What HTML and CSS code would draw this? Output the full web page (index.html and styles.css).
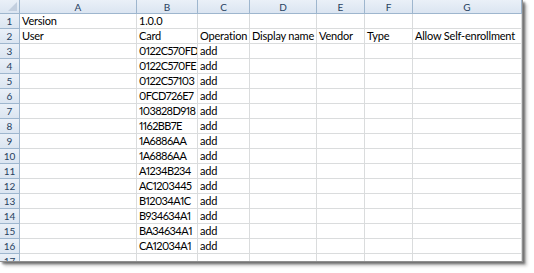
FILE: index.html
```html
<!DOCTYPE html>
<html>
<head>
<meta charset="utf-8">
<link rel="stylesheet" href="styles.css">
</head>
<body>
<div class="sheet">
  <div class="grid">
    <div class="corner"><span class="tri"></span></div>
    <div class="colhead">A</div><div class="colhead">B</div><div class="colhead">C</div><div class="colhead">D</div><div class="colhead">E</div><div class="colhead">F</div><div class="colhead">G</div>

    <div class="rowhead">1</div><div class="cell">Version</div><div class="cell">1.0.0</div><div class="cell"></div><div class="cell"></div><div class="cell"></div><div class="cell"></div><div class="cell"></div>
    <div class="rowhead">2</div><div class="cell">User</div><div class="cell">Card</div><div class="cell">Operation</div><div class="cell">Display name</div><div class="cell">Vendor</div><div class="cell">Type</div><div class="cell">Allow Self-enrollment</div>
    <div class="rowhead">3</div><div class="cell"></div><div class="cell code">0122C570FD</div><div class="cell">add</div><div class="cell"></div><div class="cell"></div><div class="cell"></div><div class="cell"></div>
    <div class="rowhead">4</div><div class="cell"></div><div class="cell code">0122C570FE</div><div class="cell">add</div><div class="cell"></div><div class="cell"></div><div class="cell"></div><div class="cell"></div>
    <div class="rowhead">5</div><div class="cell"></div><div class="cell code">0122C57103</div><div class="cell">add</div><div class="cell"></div><div class="cell"></div><div class="cell"></div><div class="cell"></div>
    <div class="rowhead">6</div><div class="cell"></div><div class="cell code">0FCD726E7</div><div class="cell">add</div><div class="cell"></div><div class="cell"></div><div class="cell"></div><div class="cell"></div>
    <div class="rowhead">7</div><div class="cell"></div><div class="cell code">103828D918</div><div class="cell">add</div><div class="cell"></div><div class="cell"></div><div class="cell"></div><div class="cell"></div>
    <div class="rowhead">8</div><div class="cell"></div><div class="cell code">1162BB7E</div><div class="cell">add</div><div class="cell"></div><div class="cell"></div><div class="cell"></div><div class="cell"></div>
    <div class="rowhead">9</div><div class="cell"></div><div class="cell code">1A6886AA</div><div class="cell">add</div><div class="cell"></div><div class="cell"></div><div class="cell"></div><div class="cell"></div>
    <div class="rowhead">10</div><div class="cell"></div><div class="cell code">1A6886AA</div><div class="cell">add</div><div class="cell"></div><div class="cell"></div><div class="cell"></div><div class="cell"></div>
    <div class="rowhead">11</div><div class="cell"></div><div class="cell code">A1234B234</div><div class="cell">add</div><div class="cell"></div><div class="cell"></div><div class="cell"></div><div class="cell"></div>
    <div class="rowhead">12</div><div class="cell"></div><div class="cell code">AC1203445</div><div class="cell">add</div><div class="cell"></div><div class="cell"></div><div class="cell"></div><div class="cell"></div>
    <div class="rowhead">13</div><div class="cell"></div><div class="cell code">B12034A1C</div><div class="cell">add</div><div class="cell"></div><div class="cell"></div><div class="cell"></div><div class="cell"></div>
    <div class="rowhead">14</div><div class="cell"></div><div class="cell code">B934634A1</div><div class="cell">add</div><div class="cell"></div><div class="cell"></div><div class="cell"></div><div class="cell"></div>
    <div class="rowhead">15</div><div class="cell"></div><div class="cell code">BA34634A1</div><div class="cell">add</div><div class="cell"></div><div class="cell"></div><div class="cell"></div><div class="cell"></div>
    <div class="rowhead">16</div><div class="cell"></div><div class="cell code">CA12034A1</div><div class="cell">add</div><div class="cell"></div><div class="cell"></div><div class="cell"></div><div class="cell"></div>
    <div class="rowhead">17</div><div class="cell"></div><div class="cell"></div><div class="cell"></div><div class="cell"></div><div class="cell"></div><div class="cell"></div><div class="cell"></div>
  </div>
</div>
</body>
</html>
```

FILE: styles.css
```css
* { box-sizing: border-box; }

html, body {
  margin: 0;
  padding: 0;
  background: #ffffff;
}

body {
  width: 534px;
  height: 273px;
  overflow: hidden;
  font-family: Lato, "Liberation Sans", sans-serif;
  font-size: 11px;
  letter-spacing: -0.2px;
  color: #000;
}

/* worksheet window with drop shadow on the right and bottom */
.sheet {
  width: 523px;
  height: 262px;
  overflow: hidden;
  background: #fff;
  border-right: 1px solid #8e8e8e;
  border-bottom: 1px solid #8e8e8e;
  box-shadow: 2px 2px 2px rgba(0,0,0,0.45), 4px 4px 3px rgba(0,0,0,0.2);
}

.grid {
  display: grid;
  grid-template-columns: 20px 117px 61px 52px 67px 48px 48px 109px;
  grid-template-rows: 14px repeat(17, 15px);
}

.grid > div {
  border-right: 1px solid #dadcdd;
  border-bottom: 1px solid #dadcdd;
  white-space: nowrap;
  overflow: hidden;
  line-height: 14px;
}

.corner,
.colhead,
.rowhead {
  background: linear-gradient(#eaf0f8, #dbe5f1);
  color: #27415f;
  font-size: 10px;
  letter-spacing: 0;
}

.grid > .corner,
.grid > .colhead,
.grid > .rowhead {
  border-color: #9eb6ce;
}

.corner {
  position: relative;
}

.tri {
  position: absolute;
  right: 2px;
  bottom: 2px;
  width: 0;
  height: 0;
  border-left: 9px solid transparent;
  border-bottom: 9px solid #c3cfdf;
}

.colhead {
  text-align: center;
  line-height: 13px;
}

.rowhead {
  text-align: center;
}

.cell {
  padding-left: 2px;
}

/* card ids: narrower figures so the hex codes fit the column */
.code {
  font-variant-numeric: proportional-nums;
  letter-spacing: -0.6px;
}
```
